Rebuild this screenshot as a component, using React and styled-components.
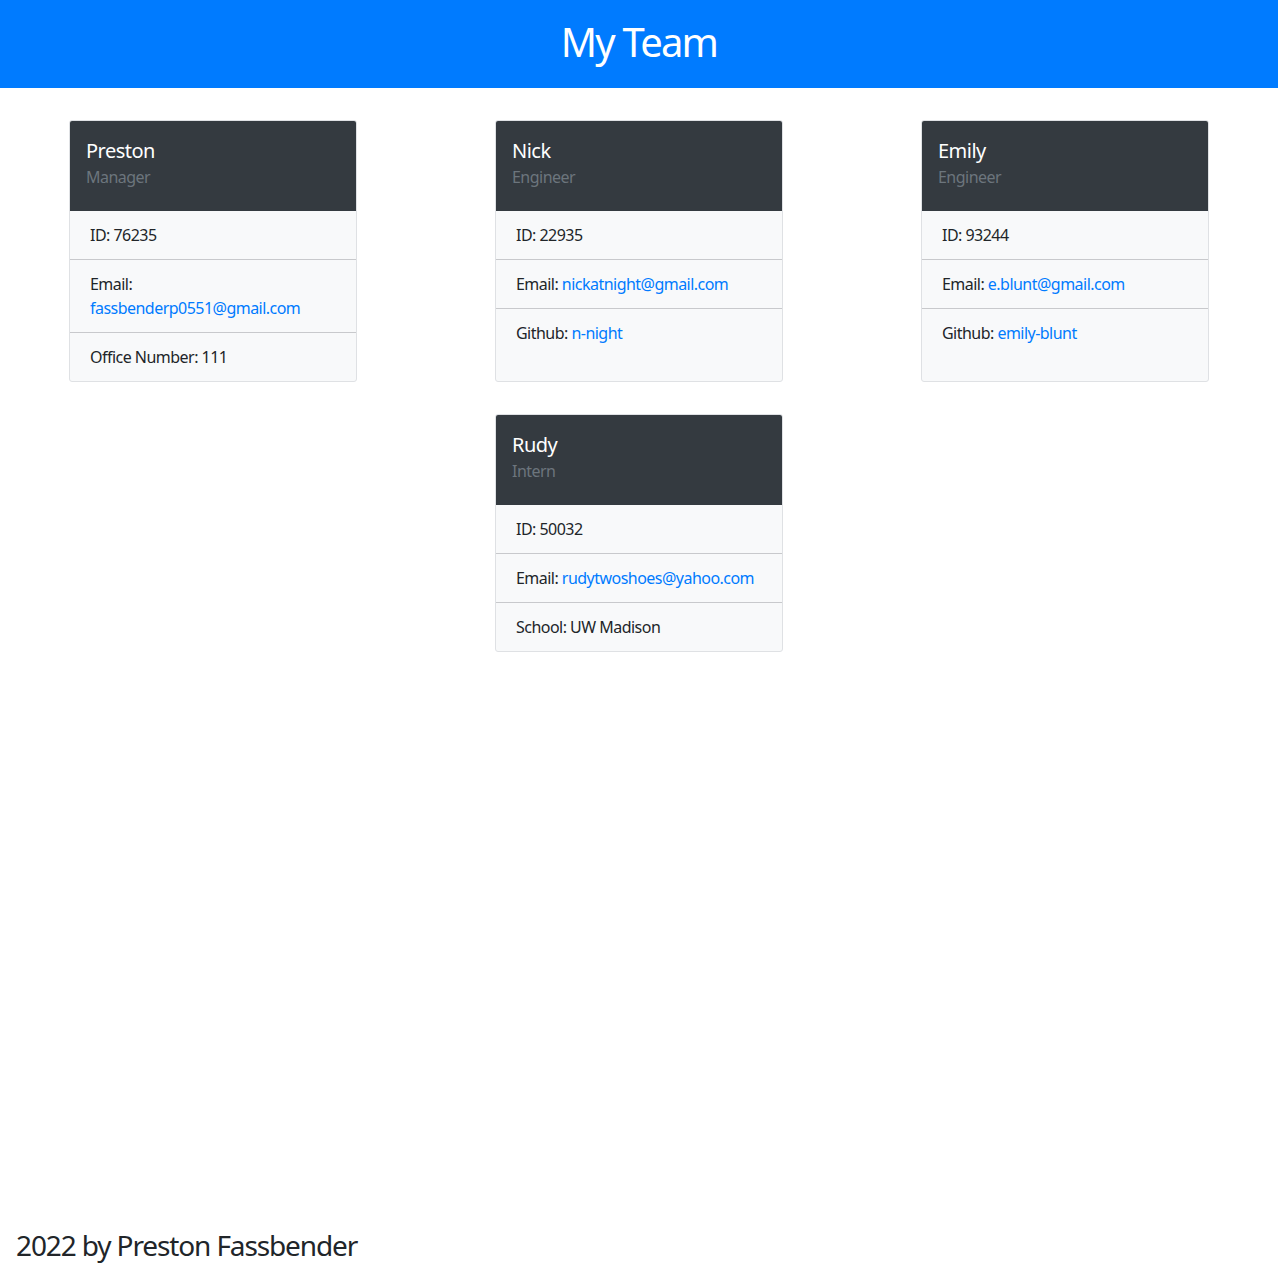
import React from 'react'
import styled, { createGlobalStyle } from 'styled-components'

const GlobalStyle = createGlobalStyle`
  * {
    box-sizing: border-box;
  }

  body {
    margin: 0;
    font-family: 'Segoe UI', 'Noto Sans', 'Open Sans', sans-serif;
    font-size: 16px;
    line-height: 1.5;
    letter-spacing: -0.033em;
    color: #212529;
    background: #ffffff;
  }
`

const colors = {
  primary: '#007bff',
  dark: '#343a40',
  light: '#f8f9fa',
  muted: '#6c757d',
  text: '#212529',
}

const team = [
  {
    name: 'Preston',
    role: 'Manager',
    id: 76235,
    email: 'fassbenderp0551@gmail.com',
    extra: { label: 'Office Number', value: '111' },
  },
  {
    name: 'Nick',
    role: 'Engineer',
    id: 22935,
    email: 'nickatnight@gmail.com',
    extra: { label: 'Github', value: 'n-night', link: true },
  },
  {
    name: 'Emily',
    role: 'Engineer',
    id: 93244,
    email: 'e.blunt@gmail.com',
    extra: { label: 'Github', value: 'emily-blunt', link: true },
  },
  {
    name: 'Rudy',
    role: 'Intern',
    id: 50032,
    email: 'rudytwoshoes@yahoo.com',
    extra: { label: 'School', value: 'UW Madison' },
  },
]

const Page = styled.div`
  min-height: 100vh;
  display: flex;
  flex-direction: column;
`

const Banner = styled.header`
  height: 88px;
  padding-bottom: 5px;
  background: ${colors.primary};
  display: flex;
  justify-content: center;
  align-items: center;
`

const BannerTitle = styled.h1`
  margin: 0;
  font-size: 40px;
  font-weight: 400;
  line-height: 48px;
  letter-spacing: -0.045em;
  color: #ffffff;
`

const CardGrid = styled.main`
  display: flex;
  flex-wrap: wrap;
  justify-content: center;
`

const Card = styled.div`
  width: 288px;
  margin: 32px 69px 0;
  display: flex;
  flex-direction: column;
  background: ${colors.light};
  border: 1px solid #dfe1e4;
  border-radius: 3px;
  overflow: hidden;
`

const CardHeader = styled.div`
  height: 90px;
  padding: 18px 16px 0;
  background: ${colors.dark};
`

const Name = styled.h5`
  margin: 0 0 2px;
  font-size: 20px;
  font-weight: 400;
  line-height: 24px;
  color: #ffffff;
`

const Role = styled.h6`
  margin: 0;
  font-size: 16px;
  font-weight: 400;
  line-height: 24px;
  color: ${colors.muted};
`

const InfoList = styled.ul`
  margin: 0;
  padding: 0;
  list-style: none;
`

const InfoItem = styled.li`
  padding: 12px 20px;
  font-size: 16px;
  line-height: 24px;
  color: ${colors.text};

  & + & {
    border-top: 1px solid #c8c9cc;
  }
`

const Link = styled.a`
  color: ${colors.primary};
  text-decoration: none;
`

const Footer = styled.footer`
  margin-top: auto;
  padding: 0 16px 23px;
`

const FooterText = styled.h3`
  margin: 0;
  font-size: 28px;
  font-weight: 400;
  line-height: 1.2;
  letter-spacing: -0.04em;
  color: ${colors.text};
`

const MemberCard = ({ member }) => (
  <Card>
    <CardHeader>
      <Name>{member.name}</Name>
      <Role>{member.role}</Role>
    </CardHeader>
    <InfoList>
      <InfoItem>ID: {member.id}</InfoItem>
      <InfoItem>
        Email: <Link href={`mailto:${member.email}`}>{member.email}</Link>
      </InfoItem>
      <InfoItem>
        {member.extra.label}:{' '}
        {member.extra.link ? (
          <Link href={`https://github.com/${member.extra.value}`}>{member.extra.value}</Link>
        ) : (
          member.extra.value
        )}
      </InfoItem>
    </InfoList>
  </Card>
)

const App = () => {
  return (
    <>
      <GlobalStyle />
      <Page>
        <Banner>
          <BannerTitle>My Team</BannerTitle>
        </Banner>
        <CardGrid>
          {team.map((member) => (
            <MemberCard key={member.id} member={member} />
          ))}
        </CardGrid>
        <Footer>
          <FooterText>2022 by Preston Fassbender</FooterText>
        </Footer>
      </Page>
    </>
  )
}

export default App
